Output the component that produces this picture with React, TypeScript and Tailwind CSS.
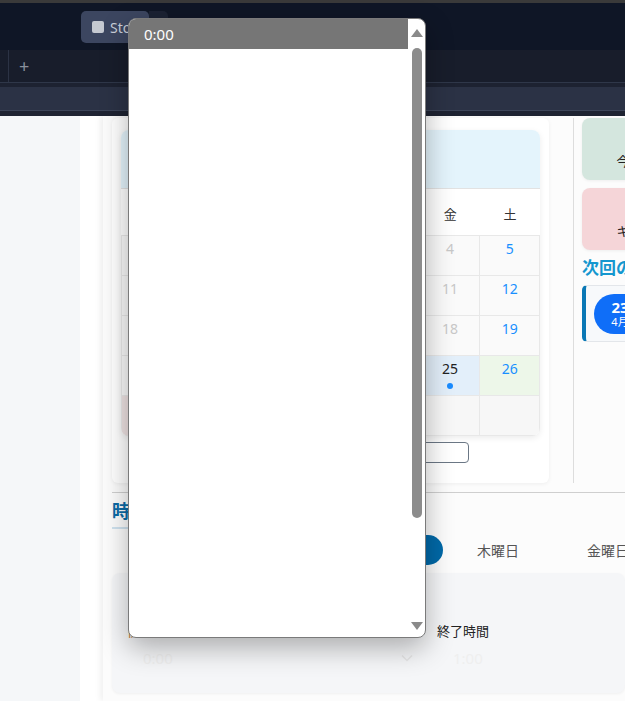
import React from 'react';

// 2025年4月のカレンダー
const weeks: { d: number | null; cur: boolean }[][] = [
  [{ d: 30, cur: false }, { d: 31, cur: false }, { d: 1, cur: true }, { d: 2, cur: true }, { d: 3, cur: true }, { d: 4, cur: true }, { d: 5, cur: true }],
  [6, 7, 8, 9, 10, 11, 12].map(d => ({ d, cur: true })),
  [13, 14, 15, 16, 17, 18, 19].map(d => ({ d, cur: true })),
  [20, 21, 22, 23, 24, 25, 26].map(d => ({ d, cur: true })),
  [{ d: 27, cur: true }, { d: 28, cur: true }, { d: 29, cur: true }, { d: 30, cur: true }, { d: null, cur: false }, { d: null, cur: false }, { d: null, cur: false }],
];
const weekdays = ['日', '月', '火', '水', '木', '金', '土'];
const TODAY = 25;

function DayCell({ d, col, row }: { d: number | null; col: number; row: number }) {
  const isToday = d === TODAY;
  const isSat = col === 6;
  const isSun = col === 0;
  let bg = 'bg-[#fafafa]';
  if (d === null) bg = 'bg-[#f7f7f7]';
  if (isToday) bg = 'bg-[#e3effa]';
  else if (row === 3 && isSat) bg = 'bg-[#edf7e9]';
  else if (row === 4 && isSun) bg = 'bg-[#efe3e3]';

  let color = 'text-[#c8c8c8]';
  if (isToday) color = 'text-[#222]';
  else if (isSat) color = 'text-[#1890ff]';
  else if (isSun) color = 'text-[#e05555]';
  else if (d !== null && d > TODAY) color = 'text-[#333]';

  return (
    <div className={`h-[40px] border-r border-b border-[#e8e8e8] flex flex-col items-center pt-[3px] ${bg}`}>
      {d !== null && <span className={`text-[14px] leading-[20px] ${color}`}>{d}</span>}
      {isToday && <span className="mt-[4px] w-[6px] h-[6px] rounded-full bg-[#1a8cff]" />}
    </div>
  );
}

export default function App() {
  return (
    <div
      className="relative w-[625px] h-[701px] overflow-hidden bg-white"
      style={{ fontFamily: '"Noto Sans", "Noto Sans CJK JP", sans-serif' }}
    >
      {/* ブラウザ風のタブバー */}
      <div className="h-[3px] bg-[#3a3a3a]" />
      <div className="h-[47px] bg-[#0f1626] flex items-start pt-[8px] pl-[81px]">
        <div className="w-[68px] h-[32px] rounded-[5px] bg-[#3c4660] flex items-center pl-[11px] gap-[6px] overflow-hidden">
          <span className="w-[12px] h-[12px] rounded-[2px] bg-[#c5c9d1] shrink-0" />
          <span className="text-[14px] text-[#c9ced8] whitespace-nowrap">Stock</span>
        </div>
        <div className="w-[19px] h-[31px] rounded-r-[5px] bg-[#1b2233]" />
      </div>
      <div className="h-[32px] bg-[#181d2b] flex items-stretch">
        <div className="w-[9px] border-r border-[#2c3345]" />
        <div className="pl-[10px] flex items-center text-[18px] leading-none text-[#8a909c]">+</div>
      </div>
      <div className="h-[1px] bg-[#2f3749]" />
      <div className="h-[4px] bg-[#1d2231]" />
      <div className="h-[23px] bg-[#2b3245]" />
      <div className="h-[1px] bg-[#3d4559]" />
      <div className="h-[5px] bg-[#1f2433]" />

      {/* ページ本体 */}
      <div className="flex h-[585px]">
        <div className="w-[80px] bg-[#f5f7f9]" />
        <div className="w-[23px] bg-white" />
        <div className="flex-1 bg-[#fcfcfc] shadow-[-3px_0_6px_rgba(0,0,0,0.06)] pl-[9px] pt-[2px] overflow-hidden">
          <div className="flex">
            {/* カレンダーカード */}
            <div className="w-[437px] shrink-0 bg-white rounded-[6px] shadow-[0_1px_4px_rgba(0,0,0,0.06)] px-[9px] pt-[12px] pb-[17px]">
              <div className="rounded-[8px] overflow-hidden shadow-[0_2px_6px_rgba(0,0,0,0.08)]">
                <div className="h-[58px] bg-[#e4f4fc] flex items-center justify-center text-[17px] font-bold text-[#0b6aa6]">
                  2025年 4月
                </div>
                <div className="grid grid-cols-7 h-[47px] bg-white border-t border-[#e2e2e2]">
                  {weekdays.map(w => (
                    <div key={w} className="flex items-center justify-center pt-[6px] text-[13px] text-[#333]">{w}</div>
                  ))}
                </div>
                <div className="grid grid-cols-7 border-t border-l border-[#e8e8e8]">
                  {weeks.map((wk, r) =>
                    wk.map((c, i) => <DayCell key={`${r}-${i}`} d={c.d} col={i} row={r} />)
                  )}
                </div>
              </div>
              <div className="mt-[6px] flex justify-center">
                <div className="w-[276px] h-[21px] border border-[#6b7785] rounded-[4px] bg-white" />
              </div>
            </div>

            {/* 縦の区切り */}
            <div className="ml-[24px] w-[1px] h-[365px] bg-[#dddddd] shrink-0" />

            {/* 右カラム */}
            <div className="pl-[8px] flex flex-col shrink-0">
              <div className="w-[160px] h-[62px] rounded-[8px] bg-[#d4e6de] shadow-[0_1px_3px_rgba(0,0,0,0.06)] flex flex-col items-center justify-end pb-[10px]">
                <span className="text-[13px] leading-[18px] text-[#222]">今月の合計時間</span>
              </div>
              <div className="mt-[8px] w-[160px] h-[62px] rounded-[8px] bg-[#f5d5d8] shadow-[0_1px_3px_rgba(0,0,0,0.06)] flex flex-col items-center justify-end pb-[10px]">
                <span className="text-[13px] leading-[18px] text-[#222]">キャンセル回数</span>
              </div>
              <div className="mt-[7px] text-[17px] leading-[22px] font-bold text-[#1597cf] whitespace-nowrap">次回のレッスン</div>
              <div className="mt-[6px] w-[180px] h-[57px] bg-[#f7f9fb] border border-[#e3e6ea] border-l-[4px] border-l-[#0a78b5] rounded-[5px] flex items-center pl-[8px]">
                <div className="w-[52px] h-[40px] rounded-full bg-[#0f6ef8] flex flex-col items-center justify-center text-white">
                  <span className="text-[15px] leading-[16px] font-bold">23</span>
                  <span className="text-[11px] leading-[14px]">4月</span>
                </div>
              </div>
            </div>
          </div>

          <div className="mt-[9px] border-t border-[#cfcfcf]" />

          {/* 時間割セクション */}
          <div className="pt-[5px]">
            <div className="inline-block text-[18px] leading-[26px] font-bold text-[#0b6aa6] border-b-2 border-[#cfe2ef] pb-[3px] pr-[20px]">
              時間割設定
            </div>
          </div>

          <div className="mt-[6px] h-[30px] flex items-center pl-[1px]">
            {['月曜日', '火曜日', '水曜日', '木曜日', '金曜日', '土曜日', '日曜日'].map((d, i) => (
              <div key={d} className="w-[110px] h-[30px] shrink-0 flex items-center justify-center">
                {i === 2 ? (
                  <div className="w-[110px] h-[30px] rounded-full bg-[#0069a8] text-white text-[14px] flex items-center justify-center">{d}</div>
                ) : (
                  <span className="text-[14px] text-[#555]">{d}</span>
                )}
              </div>
            ))}
          </div>

          <div className="mt-[8px] h-[120px] rounded-[8px] bg-[#f5f6f8] shadow-[0_1px_3px_rgba(0,0,0,0.05)] pt-[48px] pl-[16px] flex gap-[16px]">
            <div className="w-[293px] flex flex-col">
              <span className="text-[13px] leading-[20px] text-[#c77a2a]">開始時間</span>
              <div className="h-[34px] flex items-center justify-between pl-[15px] pr-[8px]">
                <span className="text-[15px] text-[#efefef]">0:00</span>
                <svg width="12" height="8" viewBox="0 0 12 8" fill="none" stroke="#e6e6e6" strokeWidth="1.5"><path d="M1 1.5l5 5 5-5" /></svg>
              </div>
            </div>
            <div className="w-[180px] flex flex-col">
              <span className="text-[13px] leading-[20px] text-[#222]">終了時間</span>
              <div className="h-[34px] flex items-center pl-[16px]">
                <span className="text-[15px] text-[#efefef]">1:00</span>
              </div>
            </div>
          </div>
        </div>
      </div>

      {/* 開いているセレクトのドロップダウン */}
      <div className="absolute left-[128px] top-[18px] w-[298px] h-[620px] bg-white border border-[#7a7a7a] rounded-[8px] shadow-[0_10px_28px_rgba(0,0,0,0.3)] overflow-hidden flex">
        <div className="flex-1">
          <div className="h-[30px] bg-[#767676] text-white text-[15px] flex items-center pl-[15px]">0:00</div>
        </div>
        <div className="w-[17px] flex flex-col items-center pt-[10px] pb-[7px]">
          <svg width="12" height="8" viewBox="0 0 12 8"><path d="M6 0L12 8H0z" fill="#8a8a8a" /></svg>
          <div className="mt-[11px] w-[10px] h-[470px] rounded-full bg-[#8c8c8c]" />
          <div className="flex-1" />
          <svg width="12" height="8" viewBox="0 0 12 8"><path d="M0 0h12L6 8z" fill="#8a8a8a" /></svg>
        </div>
      </div>
    </div>
  );
}
